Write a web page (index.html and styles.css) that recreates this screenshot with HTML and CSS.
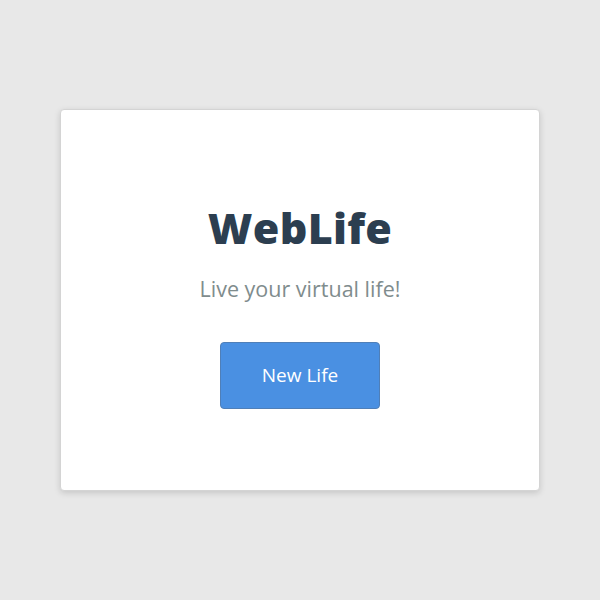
FILE: index.html
```html
<!DOCTYPE html>
<html>
<head>
<meta charset="utf-8">
<link rel="stylesheet" href="styles.css">
</head>
<body>
<div class="card">
  <h1 class="title">WebLife</h1>
  <p class="subtitle">Live your virtual life!</p>
  <button class="btn">New Life</button>
</div>
</body>
</html>
```
FILE: styles.css
```css
html, body {
  margin: 0;
  height: 100%;
}
body {
  background: #e8e8e8;
  display: flex;
  align-items: center;
  justify-content: center;
  font-family: "Open Sans", "Noto Sans", sans-serif;
}
.card {
  box-sizing: border-box;
  width: 480px;
  height: 382px;
  background: #fff;
  border: 1px solid #d4d4d4;
  border-radius: 4px;
  box-shadow: 0 2px 6px rgba(0,0,0,0.15);
  display: flex;
  flex-direction: column;
  align-items: center;
  justify-content: center;
  padding-top: 8px;
}
.title {
  margin: 0;
  font-size: 43px;
  font-weight: 800;
  color: #2c3e50;
  line-height: 56px;
  letter-spacing: 0.3px;
}
.subtitle {
  margin: 19px 0 0;
  font-size: 21.5px;
  color: #7f8c8d;
  line-height: 28px;
}
.btn {
  margin-top: 39px;
  width: 160px;
  height: 67px;
  background: #4a90e2;
  border: 1px solid #4f7fb8;
  border-radius: 4px;
  color: #fff;
  font-family: inherit;
  font-size: 19px;
  font-weight: 500;
}
```
